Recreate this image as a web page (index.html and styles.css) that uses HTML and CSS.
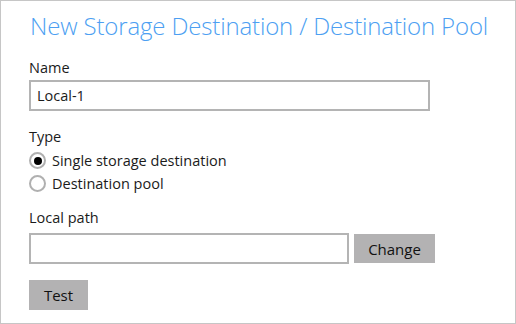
FILE: index.html
```html
<!DOCTYPE html>
<html>
<head>
<meta charset="utf-8">
<link rel="stylesheet" href="styles.css">
</head>
<body>
<div class="panel">
  <h1 class="title">New Storage Destination / Destination Pool</h1>
  <div class="label label-name">Name</div>
  <div class="field field-name">Local-1</div>
  <div class="label label-type">Type</div>
  <div class="radios">
    <label class="radio-row"><span class="radio checked"></span><span class="radio-text">Single storage destination</span></label>
    <label class="radio-row"><span class="radio"></span><span class="radio-text">Destination pool</span></label>
  </div>
  <div class="label label-path">Local path</div>
  <div class="path-row">
    <div class="field field-path"></div>
    <button class="btn btn-change">Change</button>
  </div>
  <button class="btn btn-test">Test</button>
</div>
</body>
</html>
```
FILE: styles.css
```css
html, body {
  margin: 0;
  padding: 0;
  background: #ffffff;
}
body {
  font-family: "Open Sans", "Noto Sans", sans-serif;
  color: #1b1b1b;
}
.panel {
  box-sizing: border-box;
  width: 516px;
  height: 324px;
  border: 1px solid #c6c6c6;
  padding: 10px 0 0 28px;
}
.title {
  margin: 0;
  font-size: 24px;
  line-height: 30px;
  font-weight: 300;
  color: #4d9ff2;
  letter-spacing: -0.15px;
  padding-left: 1px;
}
.label {
  font-size: 14.5px;
  line-height: 16px;
}
.label-name { margin-top: 19px; }
.label-type { margin-top: 18px; }
.label-path { margin-top: 15px; }
.field {
  box-sizing: border-box;
  height: 31px;
  border: 2px solid #b4b4b4;
  background: #fff;
  font-size: 14.5px;
  line-height: 27px;
  padding-left: 6px;
}
.field-name {
  width: 401px;
  margin-top: 4px;
}
.radios {
  margin-top: 4px;
}
.radio-row {
  display: flex;
  align-items: center;
  height: 23px;
  font-size: 14.5px;
}
.radio {
  box-sizing: border-box;
  width: 17px;
  height: 17px;
  border: 2px solid #b0b0b0;
  border-radius: 50%;
  display: flex;
  align-items: center;
  justify-content: center;
  margin-right: 6px;
}
.radio.checked::after {
  content: "";
  width: 8px;
  height: 8px;
  border-radius: 50%;
  background: #000;
}
.path-row {
  display: flex;
  align-items: center;
  margin-top: 7px;
  gap: 5px;
}
.field-path {
  width: 320px;
}
.btn {
  border: none;
  background: #b3b2b3;
  font-family: "Open Sans", "Noto Sans", sans-serif;
  font-size: 15px;
  color: #111111;
  padding: 0;
  display: block;
}
.btn-change {
  width: 81px;
  height: 29px;
}
.btn-test {
  width: 59px;
  height: 30px;
  margin-top: 16px;
}
```
